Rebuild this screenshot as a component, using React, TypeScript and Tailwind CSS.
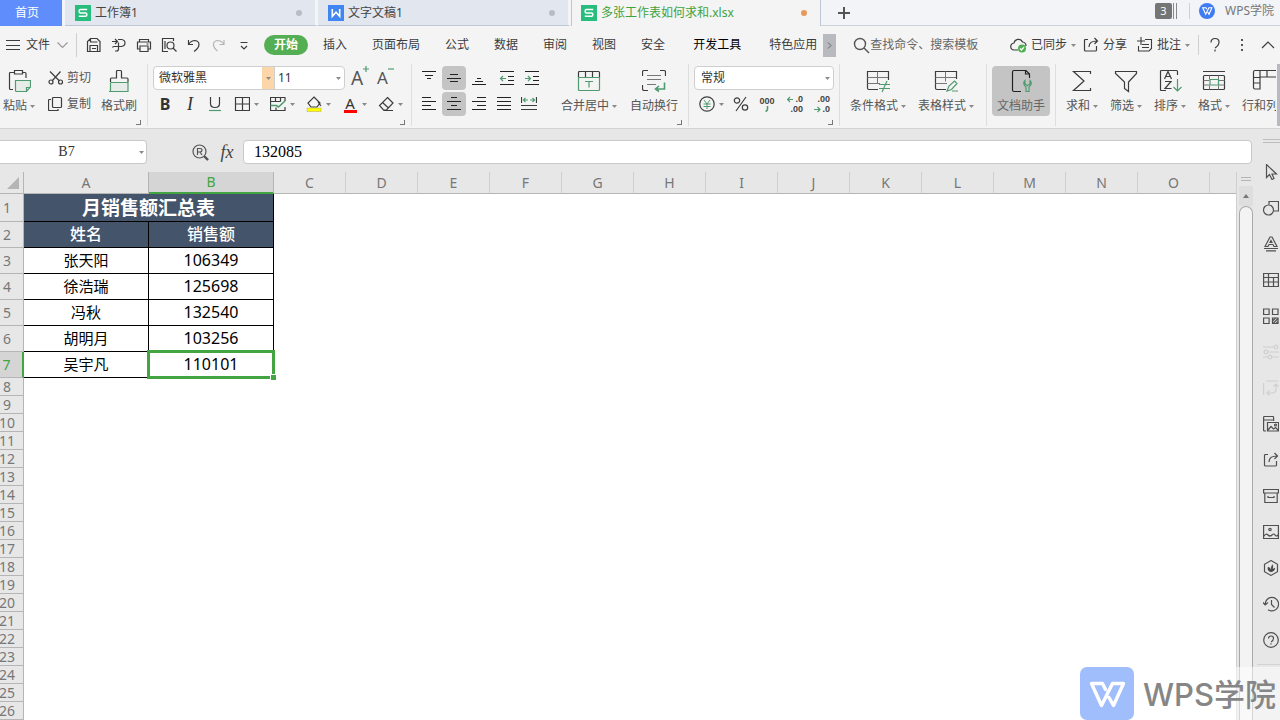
import type { ReactNode } from "react";
import clsx from "clsx";

const INK = "#3c3c3c";
const GREEN = "#4f9a6f";

type IconProps = { size?: number; w?: number; color?: string; sw?: number; children: ReactNode };

function Icon({ size = 16, w, color = INK, sw = 1.2, children }: IconProps) {
  return (
    <svg
      width={w ?? size}
      height={size}
      viewBox={`0 0 ${w ?? size} ${size}`}
      fill="none"
      stroke={color}
      strokeWidth={sw}
      className="shrink-0"
      aria-hidden="true"
    >
      {children}
    </svg>
  );
}

function Caret({ className }: { className?: string }) {
  return (
    <svg width="5" height="3" viewBox="0 0 5 3" className={clsx("shrink-0", className)} aria-hidden="true">
      <path d="M0 0h5L2.5 3z" fill="#8a8a8a" />
    </svg>
  );
}

/* ---------- Window tabs ---------- */

function SheetLogo() {
  return (
    <svg width="16" height="16" viewBox="0 0 16 16" className="shrink-0" aria-hidden="true">
      <rect width="16" height="16" fill="#27bd7d" />
      <path d="M12.2 4.6H5.4q-1.2 0-1.2 1.2v.9q0 1.2 1.2 1.2h5.2q1.2 0 1.2 1.2v1q0 1.2-1.2 1.2H3.8" fill="none" stroke="#fff" strokeWidth="1.5" />
    </svg>
  );
}

function WriterLogo() {
  return (
    <svg width="16" height="16" viewBox="0 0 16 16" className="shrink-0" aria-hidden="true">
      <rect width="16" height="16" fill="#3f86f2" />
      <path d="M4.3 4v7.3L8 7.2l3.7 4.1V4" fill="none" stroke="#fff" strokeWidth="1.6" />
    </svg>
  );
}

function FileTab({ logo, title, active }: { logo: ReactNode; title: string; active?: boolean }) {
  return (
    <button
      className={clsx(
        "flex shrink-0 items-center gap-1 pr-[13px] text-left",
        active
          ? "w-[250px] border-x border-[#bfc6d4] bg-[#f4f4f4] pl-[9px] text-[#3da33d]"
          : "w-[253px] border-r-[3px] border-b border-r-[#f2f4f8] border-b-[#bfc6d4] bg-[#e2e6ef] pl-[10px] text-[#444]"
      )}
    >
      {logo}
      <span className="flex-1 truncate">{title}</span>
      <span className={clsx("size-[6px] rounded-full", active ? "bg-[#e8995a]" : "bg-[#b9bcc2]")} />
    </button>
  );
}

function TabBar() {
  return (
    <header className="flex h-[26px] shrink-0 bg-[#f2f4f8]">
      <button className="mr-[3px] w-[62px] shrink-0 bg-[#5f8dfc] pr-2 text-center text-white">首页</button>
      <FileTab logo={<SheetLogo />} title="工作簿1" />
      <FileTab logo={<WriterLogo />} title="文字文稿1" />
      <FileTab logo={<SheetLogo />} title="多张工作表如何求和.xlsx" active />
      <div className="flex min-w-0 flex-1 items-center border-b border-[#ccd1dc] pr-[6px] pl-[17px]">
        <button aria-label="新建">
          <Icon size={12} sw={2} color="#555">
            <path d="M6 0v12M0 6h12" />
          </Icon>
        </button>
        <div className="ml-auto flex items-center pb-[3px]">
          <span className="flex h-4 w-[17px] items-center justify-center rounded-[2px] bg-[#757575] text-[11px] text-white">3</span>
          <span className="ml-px h-4 w-[4px] border-x border-[#888]" />
          <span className="ml-3 h-4 w-px bg-[#d0d0d0]" />
          <svg width="16" height="16" viewBox="0 0 16 16" className="ml-[9px]" aria-hidden="true">
            <circle cx="8" cy="8" r="8" fill="#3f7cf4" />
            <path d="M7.800 6.300L7 4.800H3.700l3 6.500 3.200-6.500h3L10 11.300 8.700 9" fill="none" stroke="#fff" strokeWidth="1.1" />
          </svg>
          <span className="ml-[10px] text-[#777]">WPS学院</span>
        </div>
      </div>
    </header>
  );
}

/* ---------- Menu row ---------- */

const quickIcons: { label: string; icon: ReactNode }[] = [
  {
    label: "保存",
    icon: (
      <Icon>
        <path d="M1.5 4.5v10h12.5v-10l-3-3H4.5zM4 14.5v-6h7.5v6M4.5 1.5v3.5h7M6 11.5h4" />
      </Icon>
    ),
  },
  {
    label: "输出为PDF",
    icon: (
      <Icon>
        <path d="M1 4.500h5M4 2l2.500 2.500L4 7M7 2.500h3.500q3.500 .5 3.500 3.500t-3.500 3.500H3q-1.500 0-1.500 1M7.500 5.500V12q0 2-2 2H4" />
      </Icon>
    ),
  },
  {
    label: "打印",
    icon: (
      <Icon>
        <path d="M3.500 5V2.500h9V5M3.500 12H1.500V5h13v7h-2M4 9h8v5.500H4zM10.500 7h2M3.500 5h9" />
      </Icon>
    ),
  },
  {
    label: "打印预览",
    icon: (
      <Icon>
        <path d="M7 14.500H1.500v-13h11V4M4 4v8" />
        <circle cx="9.500" cy="8.500" r="3.500" />
        <path d="M12 11l3.500 3.500" />
      </Icon>
    ),
  },
  {
    label: "撤销",
    icon: (
      <Icon>
        <path d="M2.500 3v4.500H7M2.500 7.500Q5 3.500 9 3.500q4 .5 4 4t-5 7" />
      </Icon>
    ),
  },
  {
    label: "恢复",
    icon: (
      <Icon color="#b5b5b5">
        <path d="M13 3v4.500H8.500M13 7.500Q10.500 3.500 6.500 3.500q-4 .5-4 4t4 6.500" />
      </Icon>
    ),
  },
  {
    label: "更多",
    icon: (
      <Icon>
        <path d="M4.500 5.500h7M5 9l3 3 3-3" />
      </Icon>
    ),
  },
];

const menus = ["插入", "页面布局", "公式", "数据", "审阅", "视图", "安全"];

function MenuRow() {
  return (
    <nav className="flex h-[38px] shrink-0 items-center overflow-hidden pr-1 pl-[6px] whitespace-nowrap text-[#3c3c3c]">
      <button className="flex items-center gap-[6px]">
        <Icon size={14}>
          <path d="M0 2.500h14M0 7.500h14M0 11.500h14" />
        </Icon>
        文件
        <Icon size={12} color="#999">
          <path d="M1.500 3.500l5 5 5-5" />
        </Icon>
      </button>
      <span className="mr-[5px] ml-2 h-6 w-px bg-[#d0d0d0]" />
      <div className="flex gap-px">
        {quickIcons.map((q) => (
          <button key={q.label} aria-label={q.label} className="flex w-6 justify-center">
            {q.icon}
          </button>
        ))}
      </div>
      <button className="ml-2 h-5 w-11 rounded-full bg-[#54ae54] font-bold text-white">开始</button>
      <div className="ml-[15px] flex gap-[25px]">
        {menus.map((m) => (
          <button key={m}>{m}</button>
        ))}
      </div>
      <button className="ml-7 text-black">开发工具</button>
      <button className="ml-7">特色应用</button>
      <button aria-label="向右滚动" className="ml-[6px] flex h-[23px] w-[13px] items-center justify-center bg-[#b9babf]">
        <Icon size={7} color="#666" sw={1}>
          <path d="M2 .5l3 3-3 3" />
        </Icon>
      </button>
      <label className="ml-[17px] flex items-center">
        <Icon size={17} sw={1.400} color="#555">
          <circle cx="7" cy="7" r="5.500" />
          <path d="M11 11l5 5" />
        </Icon>
        <input
          aria-label="查找命令"
          placeholder="查找命令、搜索模板"
          className="w-[112px] bg-transparent outline-none placeholder:text-[#666]"
        />
      </label>
      <div className="ml-auto flex items-center">
        <button className="flex items-center gap-1">
          <Icon w={17}>
            <path d="M8 13H4.500a3.500 3.500 0 01-.5-7 4.500 4.500 0 018.500-1 4 4 0 013.500 4" />
            <circle cx="12" cy="11.500" r="4" fill="#4caf50" stroke="none" />
            <path d="M10 11.500l1.500 1.500 2.500-3" stroke="#fff" />
          </Icon>
          已同步
          <Caret />
        </button>
        <button className="ml-[7px] flex items-center gap-1">
          <Icon>
            <path d="M5 2.500H2.500q-1 0-1 1v9.500q0 1 1 1h10q1 0 1-1V9M6 10q0-6 8-6M11.500 1L14.500 4l-3 3" />
          </Icon>
          分享
        </button>
        <button className="ml-[10px] flex items-center gap-1">
          <Icon>
            <path d="M8 2.500h6.500v9l-2.500 2.500H1.500V9M4 0v8M0 4h8M5 7.500h7M5 10.500h7" strokeWidth="1.1" />
          </Icon>
          批注
          <Caret />
        </button>
        <span className="mx-2 h-5 w-px bg-[#d0d0d0]" />
        <button aria-label="帮助" className="flex w-4 justify-center">
          <Icon>
            <path d="M4 5.500Q4 1.500 8 1.500t4 3.500-4 6M8 12.500v2" />
          </Icon>
        </button>
        <button aria-label="更多选项" className="ml-[11px] flex w-4 justify-center">
          <Icon sw={0}>
            <path d="M7 2h2v2H7zM7 7h2v2H7zM7 12h2v2H7z" fill="#555" />
          </Icon>
        </button>
        <button aria-label="收起功能区" className="ml-[10px]">
          <Icon>
            <path d="M2 11l6-6 6 6" />
          </Icon>
        </button>
      </div>
    </nav>
  );
}

/* ---------- Ribbon ---------- */

function Group({ className, launcher, children }: { className?: string; launcher?: boolean; children: ReactNode }) {
  return (
    <section className={clsx("flex h-[62px] shrink-0 flex-col border-r border-[#dedede] pt-[2px]", className)}>
      <div className="flex h-[50px]">{children}</div>
      {launcher && (
        <button aria-label="更多设置" className="mt-1 mr-[6px] size-[5px] self-end border-r border-b border-[#777]" />
      )}
    </section>
  );
}

function BigButton({ label, caret, active, className, children }: { label: string; caret?: boolean; active?: boolean; className?: string; children: ReactNode }) {
  return (
    <button
      className={clsx(
        "flex h-[50px] shrink-0 flex-col items-center gap-[5px] pt-[3px] whitespace-nowrap",
        active && "rounded-[4px] bg-[#c4c4c4] px-[5px] text-[#666]",
        className
      )}
    >
      <Icon size={24} sw={1.200}>
        {children}
      </Icon>
      <span className="flex items-center gap-[3px]">
        {label}
        {caret && <Caret />}
      </span>
    </button>
  );
}

function Tool({ label, active, children }: { label: string; active?: boolean; children: ReactNode }) {
  return (
    <button
      aria-label={label}
      className={clsx("flex size-6 shrink-0 items-center justify-center", active && "rounded-[4px] bg-[#c4c4c4]")}
    >
      {children}
    </button>
  );
}

function Split({ label, children }: { label: string; children: ReactNode }) {
  return (
    <button aria-label={label} className="flex h-6 shrink-0 items-center gap-1">
      {children}
      <Caret />
    </button>
  );
}

function Lines({ d }: { d: string }) {
  return (
    <Icon>
      <path d={d} stroke="#222" strokeWidth="1.2" />
    </Icon>
  );
}

function Indent({ arrow }: { arrow: string }) {
  return (
    <Icon>
      <path d="M1 1.500h14M9 6.500h6M9 10.500h6M1 14.500h14" stroke="#222" />
      <path d={arrow} stroke={GREEN} />
    </Icon>
  );
}

function Ribbon() {
  return (
    <div className="flex h-16 shrink-0 overflow-hidden text-[#555]">
      <Group className="w-[148px] pl-[3px]" launcher>
        <BigButton label="粘贴" caret className="w-8">
          <path d="M7 3.500H3.500q-1 0-1 1v15q0 1 1 1H6M16 3.500h2q1 0 1 1V9M7.500 1.500h8v3.500H7.500z" />
          <path d="M8.500 11.500h15v6.500l-4 4.500H9.500q-1 0-1-1zM23.500 18.500h-4v4" stroke={GREEN} fill="#e6ece8" />
        </BigButton>
        <div className="ml-[13px] flex flex-col gap-[2px]">
          <button className="flex h-6 items-center gap-[3px]">
            <Icon>
              <path d="M2 1.500l9.500 9.500M12.500 1.500L4 11" />
              <circle cx="3" cy="12" r="2" />
              <circle cx="12.500" cy="12" r="2" />
            </Icon>
            剪切
          </button>
          <button className="flex h-6 items-center gap-[3px]">
            <Icon>
              <path d="M5.500 1.500h7q1 0 1 1v8q0 1-1 1h-7q-1 0-1-1v-8q0-1 1-1zM3 3.500H1.500q-1 0-1 1v9q0 1 1 1H10V13" />
            </Icon>
            复制
          </button>
        </div>
        <BigButton label="格式刷" className="ml-[10px]">
          <path d="M3.500 13V10q0-1 1-1H9.500V2.500q0-1 1-1h3q1 0 1 1V9h5.500q1 0 1 1v3" />
          <path d="M3.500 13.500h17.500v9H2M3.500 13.500v9" stroke={GREEN} fill="#e6ece8" />
        </BigButton>
      </Group>

      <Group className="w-[264px] pl-[5px]" launcher>
        <div className="flex flex-col gap-[2px]">
          <div className="flex items-center">
            <div className="flex h-6 w-[192px] items-center overflow-hidden rounded-[4px] border border-[#cfcfcf] bg-white">
              <select aria-label="字体" defaultValue="微软雅黑" className="w-[108px] appearance-none bg-transparent pl-[5px] text-[#333] outline-none">
                <option>微软雅黑</option>
                <option>宋体</option>
              </select>
              <span className="flex h-full w-3 items-center justify-center bg-[#fcd5a8]">
                <Caret />
              </span>
              <select aria-label="字号" defaultValue="11" className="h-full w-[62px] appearance-none border-l border-[#cfcfcf] bg-transparent pl-[3px] text-[#333] outline-none">
                <option>11</option>
                <option>12</option>
              </select>
              <Caret />
            </div>
            <button aria-label="增大字号" className="ml-[6px] flex w-[18px] items-start">
              <span className="text-[19px] leading-6">A</span>
              <Icon size={6} w={6} color={GREEN}>
                <path d="M3 0v6M0 3h6" />
              </Icon>
            </button>
            <button aria-label="减小字号" className="ml-2 flex w-[18px] items-start">
              <span className="text-[17px] leading-6">A</span>
              <Icon size={6} w={6} color={GREEN}>
                <path d="M0 3h6" />
              </Icon>
            </button>
          </div>
          <div className="flex items-center">
            <div className="flex gap-px">
              <Tool label="加粗">
                <span className="text-[16px] leading-6 font-bold text-[#333]">B</span>
              </Tool>
              <Tool label="倾斜">
                <span className="font-['Liberation_Serif',serif] text-[18px] leading-6 text-[#333] italic">I</span>
              </Tool>
              <Tool label="下划线">
                <Icon>
                  <path d="M3.500 1v6.500q0 4 4.500 4t4.500-4V1" />
                  <path d="M2 14.500h12" stroke={GREEN} />
                </Icon>
              </Tool>
            </div>
            <div className="ml-[7px] flex gap-[11px]">
              <Split label="边框">
                <Icon>
                  <path d="M1.500 1.500h14v13h-14zM8.500 1.500v13M1.500 8h14" />
                </Icon>
              </Split>
              <Split label="单元格样式">
                <Icon>
                  <path d="M15 5V1.500H.5v13H15V11M.5 5.500h10M5.500 1.500v4M10.500 1.500v4M6 14.500v-3" />
                  <path d="M.5 9.500h6l2 1.500 6.500-6" stroke={GREEN} strokeWidth="1.600" />
                </Icon>
              </Split>
              <Split label="填充颜色">
                <Icon>
                  <path d="M8 1l6 6-3 4H5L2 7zM12 6l3 4" />
                  <path d="M1 12h14v3.500H1z" fill="#ff0" stroke="#b7a94a" strokeWidth=".5" />
                </Icon>
              </Split>
              <Split label="字体颜色">
                <span className="flex w-4 flex-col items-center">
                  <span className="text-[15px] leading-[14px] text-[#333]">A</span>
                  <span className="h-[3px] w-[13px] bg-[#f00]" />
                </span>
              </Split>
              <Split label="清除">
                <Icon>
                  <path d="M9.500 1.500L15 7l-6.500 7H5.500L1.500 9.500zM4.500 6.500l6 5.500M5.500 14.500h9.500" />
                </Icon>
              </Split>
            </div>
          </div>
        </div>
      </Group>

      <Group className="w-[277px] pl-[5px]" launcher>
        <div className="flex w-32 flex-col gap-[2px]">
          <div className="flex gap-px">
            <Tool label="顶端对齐"><Lines d="M1 1.500h14M4 5.500h8M6 8.500h4" /></Tool>
            <Tool label="垂直居中" active><Lines d="M4 4.500h8M1 8.500h14M4 11.500h8" /></Tool>
            <Tool label="底端对齐"><Lines d="M6 8.500h4M4 11.500h8M1 14.500h14" /></Tool>
            <span className="w-[2px]" />
            <Tool label="减少缩进"><Indent arrow="M7 8.500H1.500M4 6L1.500 8.500 4 11" /></Tool>
            <Tool label="增加缩进"><Indent arrow="M1 8.500h5.500M4 6l2.500 2.500L4 11" /></Tool>
          </div>
          <div className="flex gap-px">
            <Tool label="左对齐"><Lines d="M1 1.500h9M1 5.500h14M1 9.500h9M1 13.500h14" /></Tool>
            <Tool label="水平居中" active><Lines d="M5 1.500h6M1 5.500h14M5 9.500h6M1 13.500h14" /></Tool>
            <Tool label="右对齐"><Lines d="M6 1.500h9M1 5.500h14M6 9.500h9M1 13.500h14" /></Tool>
            <Tool label="两端对齐"><Lines d="M1 1.500h14M1 5.500h14M1 9.500h14M1 13.500h14" /></Tool>
            <Tool label="分散对齐">
              <Icon>
                <path d="M.5 1v6M15.500 1v6M0 9.500h16M0 13.500h16" />
                <path d="M2.500 4H7M9 4h4.500M4.500 2l-2 2 2 2M11.500 2l2 2-2 2" stroke={GREEN} />
              </Icon>
            </Tool>
          </div>
        </div>
        <BigButton label="合并居中" caret className="ml-4">
          <path d="M1.500 8V3.500q0-1 1-1h19q1 0 1 1V8M8.500 2.500V8M15.500 2.500V8" />
          <path d="M1.500 8.500h21v12q0 1-1 1h-19q-1 0-1-1zM8 12.500h8M12 12.500v6" stroke={GREEN} />
        </BigButton>
        <BigButton label="自动换行" className="ml-[13px]">
          <path d="M.5 7V3q0-1.500 1.500-1.500H6M18 1.500h4q1.500 0 1.500 1.500v4M.5 16v3.500Q.5 21.500 2 21.500H6" />
          <path d="M5 6.500h14M5 10.500h14M5 15.500h9" stroke="#777" strokeWidth="1" />
          <path d="M22.500 13.500v6.500H14M17 17l-3.500 3 3.500 2.500" stroke={GREEN} strokeWidth="1.600" />
        </BigButton>
      </Group>

      <Group className="w-[151px] pl-[5px]" launcher>
        <div className="flex flex-col gap-[2px]">
          <div className="flex h-6 w-[140px] items-center rounded-[4px] border border-[#cfcfcf] bg-white pr-[3px]">
            <select aria-label="数字格式" defaultValue="常规" className="flex-1 appearance-none bg-transparent pl-[6px] text-[#333] outline-none">
              <option>常规</option>
              <option>数值</option>
            </select>
            <Caret />
          </div>
          <div className="flex h-6 items-center gap-[9px] pl-[5px]">
            <Split label="中文货币符号">
              <Icon>
                <circle cx="8" cy="8" r="7.200" />
                <path d="M5 4l3 4 3-4M8 8v5M4.500 8h7M4.500 10.500h7" stroke={GREEN} strokeWidth="1" />
              </Icon>
            </Split>
            <button aria-label="百分比样式">
              <Icon>
                <circle cx="4" cy="4.500" r="2.700" />
                <circle cx="12" cy="11.500" r="2.700" />
                <path d="M13 1L3 15" />
              </Icon>
            </button>
            <button aria-label="千位分隔样式" className="flex w-[18px] flex-col items-center font-['Liberation_Sans',sans-serif] text-[9px] leading-[10px] font-bold text-[#444]">
              000
              <Icon size={6} w={4} color={GREEN} sw={1.600}>
                <path d="M2.500 0v3q0 2-2 2.500" />
              </Icon>
            </button>
            <button aria-label="增加小数位" className="w-[18px] text-right font-['Liberation_Sans',sans-serif] text-[9px] leading-[10px] font-bold text-[#444]">
              <span className="flex items-center justify-end gap-px">
                <Icon size={7} color={GREEN}><path d="M0 3.500h6M3 1L.5 3.500 3 6" /></Icon>.0
              </span>
              .00
            </button>
            <button aria-label="减少小数位" className="w-[18px] text-right font-['Liberation_Sans',sans-serif] text-[9px] leading-[10px] font-bold text-[#444]">
              .00
              <span className="flex items-center justify-end gap-px">
                <Icon size={7} color={GREEN}><path d="M0 3.500h6M3.500 1L6 3.500 3.500 6" /></Icon>.0
              </span>
            </button>
          </div>
        </div>
      </Group>

      <Group className="w-[147px] pl-[10px]">
        <BigButton label="条件格式" caret>
          <path d="M12 20.500H3q-1.500 0-1.500-1.500V2.500H22.500V11" />
          <path d="M1.500 8.500H22M11.500 2.500v12M1.500 14.500H14" stroke="#777" strokeWidth="1" />
          <path d="M13 15.500h11M13 19.500h11M21 12l-5 11" stroke={GREEN} />
        </BigButton>
        <BigButton label="表格样式" caret className="ml-3">
          <path d="M12 20.500H3q-1.500 0-1.500-1.500V2.500H22.500V10" />
          <path d="M1.500 8.500H22M11.500 2.500v10M1.500 14.500H13" stroke="#777" strokeWidth="1" />
          <path d="M13 22l2-5 5.500-5 2.500 2.500-5.500 6zM18 22h6" stroke={GREEN} />
        </BigButton>
      </Group>

      <Group className="w-[69px] pl-[5px]">
        <BigButton label="文档助手" active>
          <path d="M12 22.500H5q-1.500 0-1.500-1.500V3q0-1.500 1.500-1.500h12l3.500 3.500V9M16.500 1.500V5H20.500" stroke="#222" />
          <path d="M16 11.500v3.500l2.500 1.500 2.500-1.500v-3.500q3 3-1 6.500v4.500h-3V18q-4-3.500-1-6.500z" stroke={GREEN} />
        </BigButton>
      </Group>

      <section className="flex min-w-0 flex-1 gap-3 overflow-hidden pt-[2px] pl-[10px]">
        <BigButton label="求和" caret>
          <path d="M20.500 5V2.500h-17L14 12 3.500 21.500h17V19" />
        </BigButton>
        <BigButton label="筛选" caret>
          <path d="M1.500 2.500h21v2l-8 8.500v9.500l-4-3V13l-9-8.500z" />
        </BigButton>
        <BigButton label="排序" caret>
          <path d="M8 21.500H3.500q-1 0-1-1v-18q0-1 1-1h15q1 0 1 1V6M6.500 10l3.500-7.500L13.500 10M7.500 7.500h5M7 12.500h6l-6 7h6.500" />
          <path d="M19.500 10v12M15.500 18l4 4 4-4" stroke={GREEN} />
        </BigButton>
        <BigButton label="格式" caret>
          <path d="M1 2.500h22M2.500 6.500h19q1 0 1 1v12q0 1-1 1h-19q-1 0-1-1v-12q0-1 1-1z" />
          <path d="M1.500 11.500h6M16.500 11.500h6M1.500 16h6M16.500 16h6M7.500 6.500v4M16.500 6.500v4M7.500 16.500v4M16.500 16.500v4" stroke="#777" strokeWidth="1" />
          <path d="M8 10.500h8.500v5.500H8z" stroke={GREEN} />
        </BigButton>
        <BigButton label="行和列" caret>
          <path d="M24 1.500H3q-1.500 0-1.500 1.500v15.500q0 1.500 1.500 1.500h5V8h16M1.500 8.500H8M1.500 14H8M8 1.500V8M15 1.500V8" />
        </BigButton>
      </section>
      <span className="ml-px h-[62px] w-[3px] bg-[#b9babf]" />
    </div>
  );
}

/* ---------- Formula bar ---------- */

function FormulaBar() {
  return (
    <div className="flex h-[43px] shrink-0 items-center pt-[3px] pr-px">
      <div className="flex h-[24px] w-[147px] shrink-0 items-center rounded-r-[4px] border border-l-0 border-[#c9c9c9] bg-white pr-[2px]">
        <input
          aria-label="名称框"
          defaultValue="B7"
          className="min-w-0 flex-1 bg-transparent pr-[6px] text-center font-['Liberation_Serif',serif] text-[14px] text-[#333] outline-none"
        />
        <Caret />
      </div>
      <button aria-label="浏览公式结果" className="ml-[45px]">
        <Icon size={17} color="#555">
          <circle cx="7.500" cy="7.500" r="6.500" />
          <path d="M5.500 11V4.500H8q2 0 2 1.700T8 8H5.500M8 8l2 3M12 12l4 4" />
          <path d="M12.500 12.500l3.500 3.500" strokeWidth="2.400" />
        </Icon>
      </button>
      <button className="ml-2 w-5 font-['Liberation_Serif',serif] text-[18px] leading-5 text-[#444] italic">fx</button>
      <input
        aria-label="编辑栏"
        defaultValue="132085"
        className="ml-[6px] h-6 min-w-0 flex-1 rounded-[4px] border border-[#c9c9c9] bg-white pl-[10px] font-['Liberation_Serif',serif] text-[16px] text-black outline-none"
      />
    </div>
  );
}

/* ---------- Sheet ---------- */

const columns = ["C", "D", "E", "F", "G", "H", "I", "J", "K", "L", "M", "N", "O"];

const records: [string, string][] = [
  ["张天阳", "106349"],
  ["徐浩瑞", "125698"],
  ["冯秋", "132540"],
  ["胡明月", "103256"],
  ["吴宇凡", "110101"],
];

const emptyRows = Array.from({ length: 19 }, (_, i) => i + 8);

function RowHead({ n, active }: { n: number; active?: boolean }) {
  return (
    <th
      scope="row"
      className={clsx(
        "border-b p-0 pr-[9px] text-[14px] leading-4 font-normal",
        active
          ? "border-r-2 border-b-[#b5b5b5] border-r-[#42a542] bg-[#d5d5d5] text-[#42a542]"
          : "border-r border-[#b5b5b5] bg-[#e7e7e7] text-[#777]"
      )}
    >
      <span className="flex justify-center">{n}</span>
    </th>
  );
}

function Sheet() {
  return (
    <div className="min-w-0 flex-1 overflow-hidden bg-white">
      <table className="w-full table-fixed border-separate border-spacing-0 text-center">
        <colgroup>
          <col className="w-6" />
          <col className="w-[125px]" />
          <col className="w-[125px]" />
          {columns.map((c) => (
            <col key={c} className="w-[72px]" />
          ))}
          <col />
        </colgroup>
        <thead>
          <tr className="h-[22px] bg-[#e7e7e7] text-[14px] leading-4 text-[#777]">
            <th className="border-r border-b border-[#b5b5b5] p-0">
              <svg width="12" height="12" viewBox="0 0 12 12" className="ml-[7px]" aria-label="全选">
                <path d="M12 0v12H0z" fill="#b5b5b5" />
              </svg>
            </th>
            <th className="border-r border-b border-[#b5b5b5] p-0 font-normal">A</th>
            <th className="border-r border-b-2 border-r-[#b5b5b5] border-b-[#42a542] bg-[#d5d5d5] p-0 font-normal text-[#42a542]">B</th>
            {columns.map((c) => (
              <th key={c} className="border-r border-b border-r-[#cfcfcf] border-b-[#b5b5b5] p-0 font-normal">
                {c}
              </th>
            ))}
            <th className="border-b border-[#b5b5b5] p-0" />
          </tr>
        </thead>
        <tbody className="text-black">
          <tr className="h-7">
            <RowHead n={1} />
            <td colSpan={2} className="border-r border-b border-black bg-[#44546a] p-0 text-[19px] leading-6 font-bold text-white">
              月销售额汇总表
            </td>
          </tr>
          <tr className="h-[26px] text-[16px] leading-[22px] font-medium text-white">
            <RowHead n={2} />
            <td className="border-r border-b border-black bg-[#44546a] p-0 pb-[2px]">姓名</td>
            <td className="border-r border-b border-black bg-[#44546a] p-0 pb-[2px]">销售额</td>
          </tr>
          {records.map(([name, amount], i) => {
            const active = i === records.length - 1;
            return (
              <tr key={name} className="h-[26px] leading-[22px]">
                <RowHead n={i + 3} active={active} />
                <td className="border-r border-b border-black p-0 pb-[2px] text-[15px]">{name}</td>
                <td className="relative border-r border-b border-black p-0 pb-[2px] text-[16px]">
                  {amount}
                  {active && (
                    <>
                      <span className="absolute -inset-[2px] border-[3px] border-[#42a542]" />
                      <span className="absolute -right-[4px] -bottom-[4px] size-[7px] border border-white bg-[#42a542]" />
                    </>
                  )}
                </td>
              </tr>
            );
          })}
          {emptyRows.map((n) => (
            <tr key={n} className="h-[18px]">
              <RowHead n={n} />
            </tr>
          ))}
        </tbody>
      </table>
    </div>
  );
}

function ScrollBar() {
  return (
    <div className="flex w-[17px] shrink-0 flex-col border-l border-[#cfcfcf] pl-[2px]">
      <span className="mx-[2px] mt-[5px] h-[4px] border-y border-[#b5b5b5]" />
      <button aria-label="向上滚动" className="mt-[5px] flex h-5 items-center justify-center bg-[#dedede]">
        <svg width="6" height="4" viewBox="0 0 6 4" aria-hidden="true">
          <path d="M3 0l3 4H0z" fill="#777" />
        </svg>
      </button>
      <span className="flex-1 rounded-t-[7px] border border-b-0 border-[#a8a8a8] bg-[#f3f3f3]" />
    </div>
  );
}

/* ---------- Side bar ---------- */

const sideTools: { label: string; muted?: boolean; art: ReactNode }[] = [
  { label: "选择", art: <path d="M3.500 .5v13l3-3 2.500 5 2-1-2-4.500h4.500z" /> },
  {
    label: "形状",
    art: (
      <>
        <circle cx="5.500" cy="10" r="5" />
        <path d="M6 4.500v-3h9.500v9.500h-4.500" />
      </>
    ),
  },
  { label: "艺术字", art: <path d="M2 10.500L7 1h2l5 9.500h-3L10 8.500H6L5 10.500zM7 6.500h2L8 4.500zM1 12.500h14M3 14.800h10" /> },
  { label: "表格", art: <path d="M.6 1.500h14.800v13H.6zM.6 5.500h14.800M.6 10h14.800M5.500 1.500v13M10.500 5.500v9" /> },
  {
    label: "图标库",
    art: (
      <>
        <path d="M.6 1h5.500v5.500H.6zM9.500 1H15v5.500H9.500zM.6 10h5.500v5.500H.6zM9.500 10H15v5.500H9.500z" />
        <path d="M9.500 13l3-3M10 15.500l5-5M13 15.500l2-2" />
      </>
    ),
  },
  {
    label: "属性",
    muted: true,
    art: (
      <>
        <path d="M0 3h11M5 8h11M0 8h1M0 13h5M9 13h7" />
        <circle cx="13" cy="3" r="1.800" />
        <circle cx="3" cy="8" r="1.800" />
        <circle cx="7" cy="13" r="1.800" />
      </>
    ),
  },
  { label: "转换", muted: true, art: <path d="M3 1h12M.6 3v12M4 13h5q4 0 4-4V4M10.500 6.500L13 4l2.500 2.500M6.500 10.500L4 13l2.500 2.500" /> },
  {
    label: "素材",
    art: (
      <>
        <path d="M3 15H1.600q-1 0-1-1V1.500q0-1 1-1h8q1 0 1 1V5M.6 4h10M4.500 6.500h11v8.500h-11zM5 14l3-3.500 2.500 2.500 2-1.500 3 3" />
        <circle cx="12.500" cy="9" r="1" />
      </>
    ),
  },
  { label: "分享", art: <path d="M5 2.500H2.500q-1 0-1 1v9.500q0 1 1 1h10q1 0 1-1V9M6 10q0-6 8-6M11.500 1L14.500 4l-3 3" /> },
  { label: "归档", art: <path d="M.6 1.500h14.800V5H.6zM1.800 5v9.500h12.400V5M5 8v1.500h6V8" /> },
  {
    label: "图片",
    art: (
      <>
        <path d="M.6 1.500h14.800v13H.6zM1 12q2-3 4-1t4 0 3 0 3 0" />
        <circle cx="7" cy="5.500" r="1.200" />
      </>
    ),
  },
  {
    label: "推荐",
    art: (
      <>
        <path d="M8 .6l6.500 3.700v7.400L8 15.400l-6.500-3.700V4.300z" />
        <path d="M8 12q-4-1-3-5 2 0 3 3 0-4 1.500-5.500 1 2 0 4.500l2.500-1q0 3-4 4z" fill="#444" strokeWidth=".3" />
      </>
    ),
  },
  { label: "历史", art: <path d="M2.200 8.500A6.700 6.700 0 118 14.800M5 13.800q1.500 1 3 1M0 6.500l2.200 2.500L5 6.500M8.500 4v4.500l3 3" /> },
  {
    label: "帮助",
    art: (
      <>
        <circle cx="8" cy="8" r="7.300" />
        <path d="M5.500 6.500q0-2.500 2.500-2.500t2.500 2.200T8 10M8 11.200v1.300" />
      </>
    ),
  },
];

function SideBar() {
  return (
    <aside className="flex w-[27px] shrink-0 flex-col pt-[10px] pl-[10px]">
      <span className="mb-[11px] h-[4px] shrink-0 border-y border-[#bdbdbd]" />
      {sideTools.map((t) => (
        <button key={t.label} aria-label={t.label} className="flex h-9 shrink-0 items-center">
          <Icon color={t.muted ? "#d0d0d0" : "#505050"}>{t.art}</Icon>
        </button>
      ))}
      <span className="-ml-[6px] mt-[6px] h-px shrink-0 bg-[#d3d3d3]" />
    </aside>
  );
}

function Watermark() {
  return (
    <div className="pointer-events-none absolute right-0 bottom-0 flex h-[53px] w-[200px] items-center overflow-hidden bg-white/50">
      <svg width="54" height="53" viewBox="0 0 54 53" className="shrink-0" aria-hidden="true">
        <rect width="54" height="53" rx="7" fill="#a0bdfc" />
        <path d="M25.500 22.500L22.500 16.500H11.500L21.500 38.500L32.500 16.500H43.500L33.500 38.500L29 30.500" fill="none" stroke="#fff" strokeWidth="3.400" strokeLinejoin="round" strokeLinecap="round" />
      </svg>
      <span className="ml-[9px] pt-[2px] font-['Inter','Noto_Sans_CJK_SC',sans-serif] text-[31px] leading-[51px] font-medium whitespace-nowrap text-[#868686]">
        WPS学院
      </span>
    </div>
  );
}

export default function App() {
  return (
    <div
      lang="zh-CN"
      className="relative flex h-screen flex-col overflow-hidden bg-[#f4f4f4] font-['Noto_Sans','Noto_Sans_CJK_SC',sans-serif] text-[12px] leading-4"
    >
      <TabBar />
      <MenuRow />
      <Ribbon />
      <main className="flex min-h-0 flex-1 border-t border-[#d3d3d3] bg-[#e7e7e7]">
        <div className="flex min-w-0 flex-1 flex-col">
          <FormulaBar />
          <div className="flex min-h-0 flex-1">
            <Sheet />
            <ScrollBar />
          </div>
        </div>
        <SideBar />
      </main>
      <Watermark />
    </div>
  );
}
